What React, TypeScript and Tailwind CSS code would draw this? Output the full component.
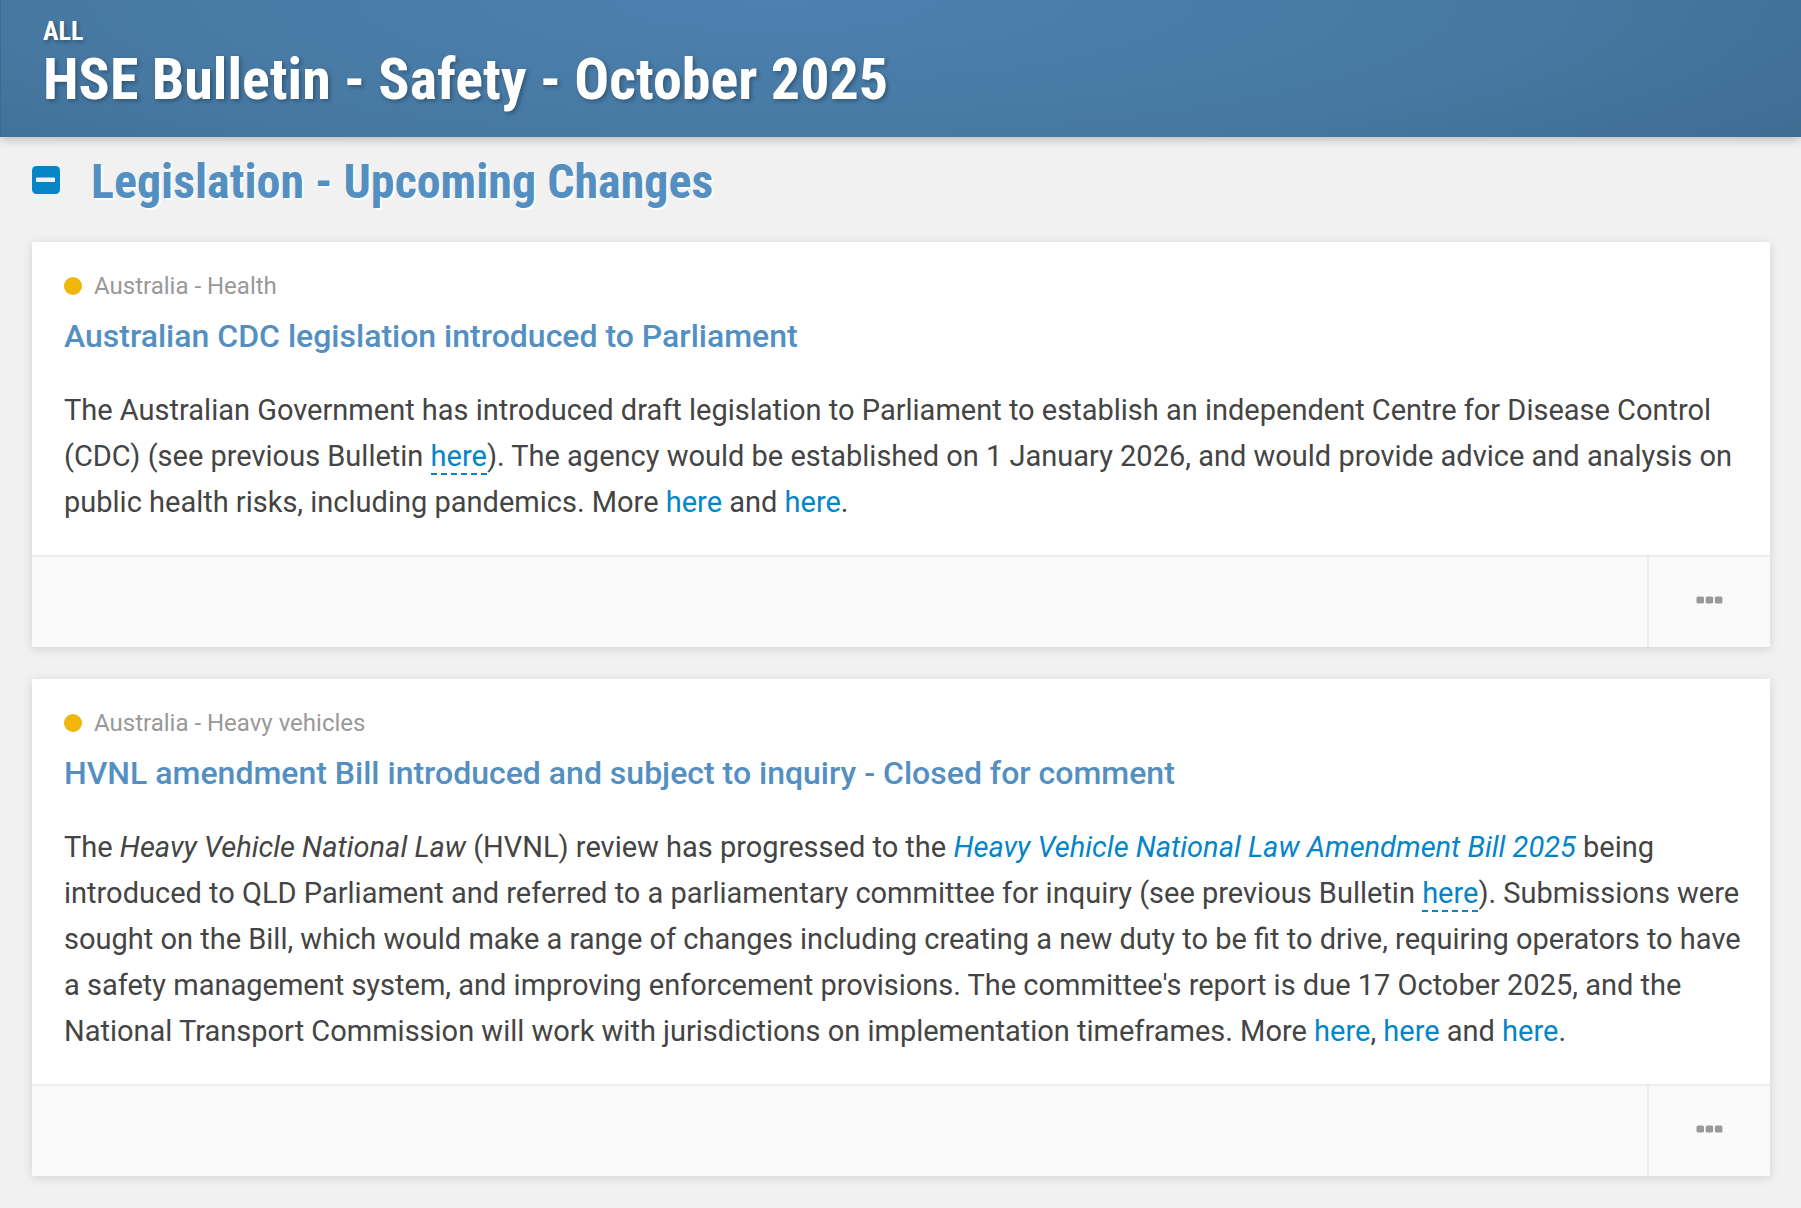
import React from "react";

const LINK = "text-[#0485c7]";

const MinusSquare = () => (
  <svg className="h-7 w-7" viewBox="0 0 28 28" aria-hidden="true">
    <rect x="0" y="0" width="28" height="28" rx="4.5" fill="#0485c7" />
    <rect x="4" y="11.5" width="19" height="4.5" rx="0.8" fill="#f1f1f1" />
  </svg>
);

const Dots = () => (
  <svg className="h-2 w-7" viewBox="0 0 28 8" fill="#999999" aria-hidden="true">
    <rect x="0.5" y="0.5" width="7.5" height="7" rx="1.6" />
    <rect x="9.7" y="0.5" width="7.5" height="7" rx="1.6" />
    <rect x="18.9" y="0.5" width="7.5" height="7" rx="1.6" />
  </svg>
);

// link to an earlier bulletin, gets the dashed underline
const BulletinLink = ({ children }: { children: React.ReactNode }) => (
  <a href="#" className={`${LINK} border-b-2 border-dashed border-[#0485c7]`}>
    {children}
  </a>
);

const TextLink = ({ children }: { children: React.ReactNode }) => (
  <a href="#" className={LINK}>
    {children}
  </a>
);

type CardProps = {
  category: string;
  title: string;
  children: React.ReactNode;
};

const Card = ({ category, title, children }: CardProps) => (
  <article className="bg-white shadow-[0_2px_10px_rgba(0,0,0,0.13)]">
    <div className="pt-8 pr-7 pb-[30px] pl-8">
      <div className="flex items-center gap-3 text-2xl leading-6 text-[#999999]">
        <span className="h-[18px] w-[18px] rounded-full bg-[#f0b60a]" />
        <span>{category}</span>
      </div>
      <h3 className="mt-[15px] text-[32px] leading-[46px] font-medium text-[#548fc1]">{title}</h3>
      <p className="mt-7 text-[29px] leading-[46px] text-[#444444]">{children}</p>
    </div>
    <div className="flex h-[92px] justify-end border-t-2 border-[#ececec] bg-[#fafafa]">
      <button
        type="button"
        aria-label="More options"
        className="flex w-[123px] items-center justify-center border-l-2 border-[#ececec] pb-1"
      >
        <Dots />
      </button>
    </div>
  </article>
);

export default function App() {
  return (
    <div className="min-h-screen bg-[#f1f1f1] font-['Roboto',sans-serif]">
      <header className="relative border-l border-[#3f6a90] bg-[radial-gradient(86%_225%_at_43%_0%,#4c81b0_0%,#4678a1_50%,#3b6487_100%)] px-[42px] pt-4 pb-[25px] font-['Roboto_Condensed','Roboto',sans-serif] font-bold text-white shadow-[0_2px_10px_rgba(0,0,0,0.25)] [text-shadow:2px_2px_4px_rgba(0,0,0,0.3)]">
        <p className="text-[26px] leading-[30px]">ALL</p>
        <h1 className="text-[58px] leading-[66px]">HSE Bulletin - Safety - October 2025</h1>
      </header>

      <main className="pr-[31px] pb-8 pl-8">
        <div className="flex items-center gap-[31px] pt-4 pb-8">
          <button type="button" aria-label="Collapse section" className="pb-[3px]">
            <MinusSquare />
          </button>
          <h2 className="font-['Roboto_Condensed','Roboto',sans-serif] text-5xl leading-[57px] font-bold text-[#548fc1] [text-shadow:2px_2px_0_#ffffff]">
            Legislation - Upcoming Changes
          </h2>
        </div>

        <div className="space-y-8">
          <Card category="Australia - Health" title="Australian CDC legislation introduced to Parliament">
            The Australian Government has introduced draft legislation to Parliament to establish an independent
            Centre for Disease Control (CDC) (see previous Bulletin <BulletinLink>here</BulletinLink>). The agency
            would be established on 1 January 2026, and would provide advice and analysis on public health risks,
            including pandemics. More <TextLink>here</TextLink> and <TextLink>here</TextLink>.
          </Card>

          <Card
            category="Australia - Heavy vehicles"
            title="HVNL amendment Bill introduced and subject to inquiry - Closed for comment"
          >
            The <em>Heavy Vehicle National Law</em> (HVNL) review has progressed to the{" "}
            <TextLink>
              <em>Heavy Vehicle National Law Amendment Bill 2025</em>
            </TextLink>{" "}
            being introduced to QLD Parliament and referred to a parliamentary committee for inquiry (see previous
            Bulletin <BulletinLink>here</BulletinLink>). Submissions were sought on the Bill, which would make a
            range of changes including creating a new duty to be fit to drive, requiring operators to have a safety
            management system, and improving enforcement provisions. The committee's report is due 17 October 2025,
            and the National Transport Commission will work with jurisdictions on implementation timeframes. More{" "}
            <TextLink>here</TextLink>, <TextLink>here</TextLink> and <TextLink>here</TextLink>.
          </Card>
        </div>
      </main>
    </div>
  );
}
